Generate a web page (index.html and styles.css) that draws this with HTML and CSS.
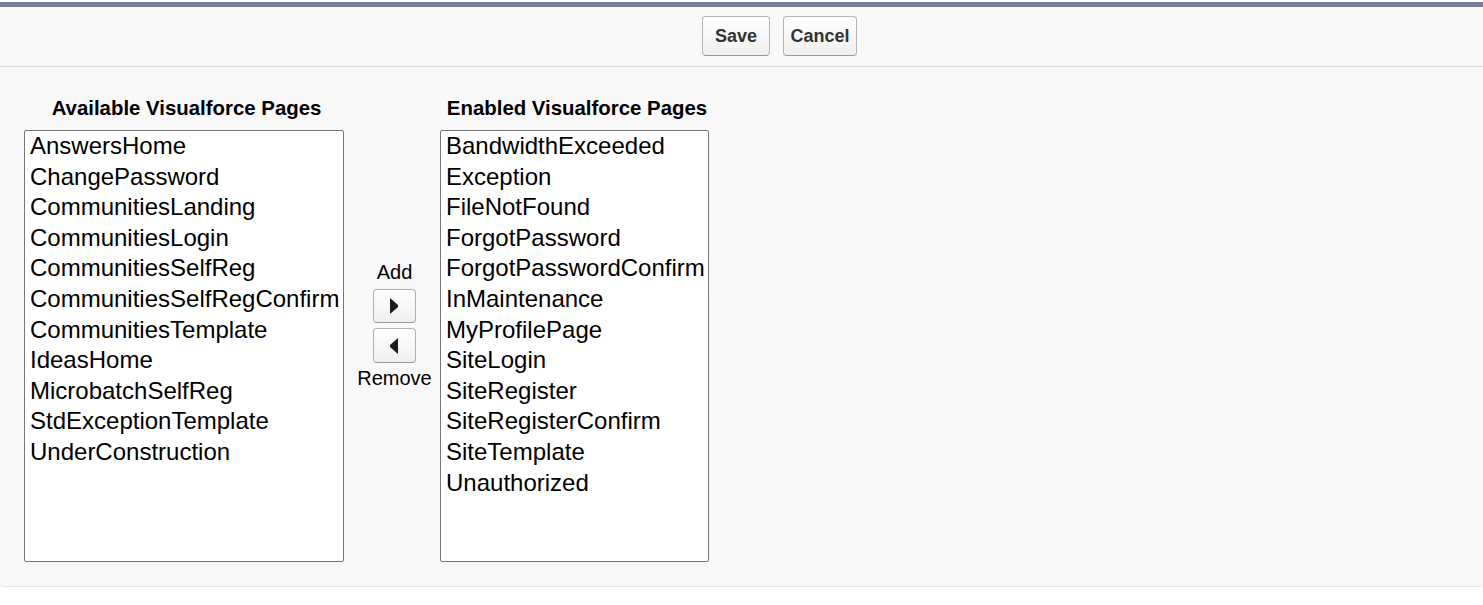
FILE: index.html
```html
<!DOCTYPE html>
<html lang="en">
<head>
<meta charset="utf-8">
<title>Visualforce Page Access</title>
<link rel="stylesheet" href="styles.css">
</head>
<body>
<div class="panel">
  <div class="header">
    <button class="btn btn-save" type="button">Save</button>
    <button class="btn btn-cancel" type="button">Cancel</button>
  </div>
  <div class="content">
    <div class="col">
      <div class="col-title">Available Visualforce Pages</div>
      <div class="listbox listbox-left">
        <div class="opt">AnswersHome</div>
        <div class="opt">ChangePassword</div>
        <div class="opt">CommunitiesLanding</div>
        <div class="opt">CommunitiesLogin</div>
        <div class="opt">CommunitiesSelfReg</div>
        <div class="opt">CommunitiesSelfRegConfirm</div>
        <div class="opt">CommunitiesTemplate</div>
        <div class="opt">IdeasHome</div>
        <div class="opt">MicrobatchSelfReg</div>
        <div class="opt">StdExceptionTemplate</div>
        <div class="opt">UnderConstruction</div>
      </div>
    </div>
    <div class="mid">
      <div class="mid-label">Add</div>
      <button class="arrow-btn arrow-add" type="button" aria-label="Add">
        <svg width="8" height="16" viewBox="0 0 8 16"><polygon points="0,0 8,7 8,9 0,16" fill="#1c1c1c"/></svg>
      </button>
      <button class="arrow-btn arrow-remove" type="button" aria-label="Remove">
        <svg width="8" height="16" viewBox="0 0 8 16"><polygon points="8,0 0,7 0,9 8,16" fill="#1c1c1c"/></svg>
      </button>
      <div class="mid-label mid-label-remove">Remove</div>
    </div>
    <div class="col">
      <div class="col-title">Enabled Visualforce Pages</div>
      <div class="listbox listbox-right">
        <div class="opt">BandwidthExceeded</div>
        <div class="opt">Exception</div>
        <div class="opt">FileNotFound</div>
        <div class="opt">ForgotPassword</div>
        <div class="opt">ForgotPasswordConfirm</div>
        <div class="opt">InMaintenance</div>
        <div class="opt">MyProfilePage</div>
        <div class="opt">SiteLogin</div>
        <div class="opt">SiteRegister</div>
        <div class="opt">SiteRegisterConfirm</div>
        <div class="opt">SiteTemplate</div>
        <div class="opt">Unauthorized</div>
      </div>
    </div>
  </div>
</div>
</body>
</html>
```

FILE: styles.css
```css
html, body {
  margin: 0;
  padding: 0;
  background: #ffffff;
  font-family: "Liberation Sans", Arial, sans-serif;
  color: #000;
}

.panel {
  margin-top: 2px;
  background: #f8f8f8;
  border-top: 5px solid #767d95;
  border-bottom: 1px solid #e3e3e3;
  border-radius: 0 0 4px 4px;
}

.header {
  height: 60px;
  box-sizing: border-box;
  border-bottom: 1px solid #dcdcdc;
  display: flex;
  align-items: flex-start;
  padding: 9px 0 0 702px;
  gap: 13px;
}

.btn {
  font-family: "Liberation Sans", Arial, sans-serif;
  font-weight: bold;
  font-size: 18px;
  color: #333;
  height: 40px;
  padding: 0;
  border: 1px solid #b5b5b5;
  border-bottom-color: #9a9a9a;
  border-radius: 4px;
  background: linear-gradient(#ffffff, #f0f0f0);
  cursor: pointer;
}

.btn-save { width: 68px; }
.btn-cancel { width: 74px; }

.content {
  display: flex;
  align-items: flex-start;
  padding: 29px 0 24px 24px;
}

.col {
  display: flex;
  flex-direction: column;
  align-items: center;
}

.col-title {
  font-size: 20.4px;
  font-weight: bold;
  line-height: 24px;
  margin-bottom: 10px;
  padding-left: 5px;
  white-space: nowrap;
}

.listbox {
  box-sizing: border-box;
  height: 432px;
  background: #fff;
  border: 1px solid #777;
  border-radius: 2px;
  padding: 0 5px;
  font-size: 24px;
  line-height: 30.6px;
  overflow: hidden;
}

.listbox-left { width: 320px; }
.listbox-right { width: 269px; }

.opt {
  white-space: nowrap;
}

.mid {
  width: 96px;
  box-sizing: border-box;
  padding: 165px 0 0 4px;
  display: flex;
  flex-direction: column;
  align-items: center;
}

.mid-label {
  font-size: 20px;
  line-height: 23px;
  padding-left: 1px;
}

.mid-label-remove {
  margin-top: 4px;
}

.arrow-btn {
  width: 43px;
  height: 34px;
  margin-top: 5px;
  padding: 0;
  border: 1px solid #b0b0b0;
  border-bottom-color: #999;
  border-radius: 4px;
  background: linear-gradient(#ffffff, #efefef);
  display: flex;
  align-items: center;
  justify-content: center;
  cursor: pointer;
}

.arrow-remove {
  height: 35px;
}
```
